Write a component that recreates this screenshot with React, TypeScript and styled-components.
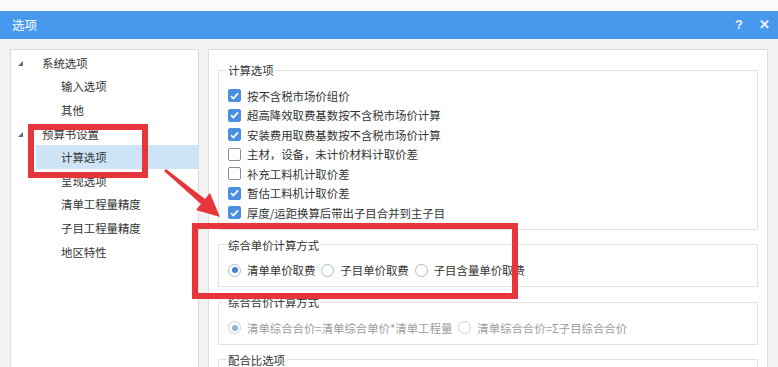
import styled, { createGlobalStyle } from 'styled-components'

const GlobalStyle = createGlobalStyle`
  html, body {
    margin: 0;
    padding: 0;
    background: #fafafa;
  }
  * {
    box-sizing: border-box;
  }
`

const FONT = `'Noto Sans CJK SC', 'Noto Sans', 'Liberation Sans', sans-serif`
const RED = '#e6353b'

const Screen = styled.div`
  position: relative;
  width: 778px;
  height: 367px;
  overflow: hidden;
  padding-top: 11px;
  background: #fafafa;
  font-family: ${FONT};
  font-size: 11.4px;
  line-height: 16px;
  color: #333;
`

const Dialog = styled.div`
  display: flex;
  flex-direction: column;
  height: 100%;
  background: #f2f2f2;
`

const TitleBar = styled.div`
  display: flex;
  flex-shrink: 0;
  align-items: center;
  justify-content: space-between;
  height: 28px;
  padding: 0 8px 0 12px;
  background: #4799ee;
  color: #fff;
  font-size: 12.5px;
`

const TitleButtons = styled.div`
  display: flex;
  align-items: center;
  gap: 16px;
  font-family: 'Liberation Sans', sans-serif;
  font-weight: bold;
  font-size: 13px;
  color: #eaf4ff;
`

const Body = styled.div`
  display: flex;
  flex: 1;
  min-height: 0;
  gap: 9px;
  padding: 10px 0 0 10px;
`

const Panel = styled.div<{ $width: number }>`
  width: ${(p) => p.$width}px;
  flex-shrink: 0;
  overflow: hidden;
  background: #fff;
  border: 1px solid #dcdcdc;
  border-bottom: none;
`

const TreeList = styled.div`
  display: flex;
  flex-direction: column;
  padding-top: 1px;
`

const TreeRow = styled.div<{ $level: number; $selected?: boolean }>`
  display: flex;
  align-items: center;
  height: 23.6px;
  margin-left: ${(p) => p.$level * 25}px;
  padding-left: ${(p) => (p.$level === 0 ? 7 : 25)}px;
  background: ${(p) => (p.$selected ? '#cde4f6' : 'transparent')};
  color: #333;
`

const Expander = styled.svg`
  width: 5px;
  height: 5px;
  margin-right: 19px;
  margin-top: 2px;
`

const RightPanel = styled(Panel)`
  padding: 12px 9px 0 9px;
`

const Group = styled.fieldset`
  margin: 0 0 7px;
  padding: 8px 10px 6px 8px;
  border: 1px solid #e2e2e2;
  min-width: 0;
`

const Legend = styled.legend`
  padding: 0 1px;
  color: #333;
`

const OptionRow = styled.label`
  display: flex;
  align-items: center;
  gap: 6px;
  height: 19.5px;
  white-space: nowrap;
`

const CheckBox = styled.span<{ $checked: boolean }>`
  display: inline-flex;
  align-items: center;
  justify-content: center;
  width: 13px;
  height: 13px;
  border-radius: 2px;
  border: 1px solid ${(p) => (p.$checked ? '#4a8fe0' : '#8c8c8c')};
  background: ${(p) => (p.$checked ? '#4a8fe0' : '#fff')};
  margin-left: 1px;
`

const RadioLine = styled.div`
  display: flex;
  align-items: center;
  gap: 5px;
  height: 19.5px;
  white-space: nowrap;
`

const RadioOption = styled.span<{ $disabled?: boolean }>`
  display: inline-flex;
  align-items: center;
  gap: 6px;
  color: ${(p) => (p.$disabled ? '#9c9c9c' : '#333')};
`

const RadioDot = styled.span<{ $checked: boolean; $disabled?: boolean }>`
  display: inline-flex;
  align-items: center;
  justify-content: center;
  width: 13px;
  height: 13px;
  border-radius: 50%;
  margin-left: 1px;
  border: 1px solid ${(p) => (p.$disabled ? '#cfcfcf' : '#a9bdd2')};
  background: #fff;

  &::after {
    content: '';
    display: ${(p) => (p.$checked ? 'block' : 'none')};
    width: 6px;
    height: 6px;
    border-radius: 50%;
    background: ${(p) => (p.$disabled ? '#8db4de' : '#3f82d4')};
  }
`

const Annotation = styled.div<{ $x: number; $y: number; $w: number; $h: number }>`
  position: absolute;
  left: ${(p) => p.$x}px;
  top: ${(p) => p.$y}px;
  width: ${(p) => p.$w}px;
  height: ${(p) => p.$h}px;
  border: 6px solid ${RED};
  pointer-events: none;
`

const ArrowLayer = styled.svg`
  position: absolute;
  left: 0;
  top: 0;
  width: 778px;
  height: 367px;
  pointer-events: none;
`

const treeItems = [
  { label: '系统选项', level: 0, expander: true },
  { label: '输入选项', level: 1 },
  { label: '其他', level: 1 },
  { label: '预算书设置', level: 0, expander: true },
  { label: '计算选项', level: 1, selected: true },
  { label: '呈现选项', level: 1 },
  { label: '清单工程量精度', level: 1 },
  { label: '子目工程量精度', level: 1 },
  { label: '地区特性', level: 1 },
]

const calcOptions = [
  { label: '按不含税市场价组价', checked: true },
  { label: '超高降效取费基数按不含税市场价计算', checked: true },
  { label: '安装费用取费基数按不含税市场价计算', checked: true },
  { label: '主材，设备，未计价材料计取价差', checked: false },
  { label: '补充工料机计取价差', checked: false },
  { label: '暂估工料机计取价差', checked: true },
  { label: '厚度/运距换算后带出子目合并到主子目', checked: true },
]

function Check({ checked }: { checked: boolean }) {
  return (
    <CheckBox $checked={checked}>
      {checked && (
        <svg width="9" height="8" viewBox="0 0 9 8">
          <path d="M1 4.2 L3.4 6.5 L8 1.4" fill="none" stroke="#fff" strokeWidth="1.7" />
        </svg>
      )}
    </CheckBox>
  )
}

function Radio({ label, checked, disabled }: { label: string; checked?: boolean; disabled?: boolean }) {
  return (
    <RadioOption $disabled={disabled}>
      <RadioDot $checked={!!checked} $disabled={disabled} />
      {label}
    </RadioOption>
  )
}

export default function App() {
  return (
    <>
      <GlobalStyle />
      <Screen>
        <Dialog>
          <TitleBar>
            <span>选项</span>
            <TitleButtons>
              <span>?</span>
              <span>✕</span>
            </TitleButtons>
          </TitleBar>

          <Body>
            <Panel $width={189}>
              <TreeList>
                {treeItems.map((item) => (
                  <TreeRow key={item.label} $level={item.level} $selected={item.selected}>
                    {item.expander && (
                      <Expander viewBox="0 0 5 5">
                        <path d="M5 0 L5 5 L0 5 Z" fill="#6b6b6b" />
                      </Expander>
                    )}
                    {item.label}
                  </TreeRow>
                ))}
              </TreeList>
            </Panel>

            <RightPanel $width={560}>
              <Group>
                <Legend>计算选项</Legend>
                {calcOptions.map((opt) => (
                  <OptionRow key={opt.label}>
                    <Check checked={opt.checked} />
                    {opt.label}
                  </OptionRow>
                ))}
              </Group>

              <Group>
                <Legend>综合单价计算方式</Legend>
                <RadioLine>
                  <Radio label="清单单价取费" checked />
                  <Radio label="子目单价取费" />
                  <Radio label="子目含量单价取费" />
                </RadioLine>
              </Group>

              <Group>
                <Legend>综合合价计算方式</Legend>
                <RadioLine>
                  <Radio label="清单综合合价=清单综合单价*清单工程量" checked disabled />
                  <Radio label="清单综合合价=Σ子目综合合价" disabled />
                </RadioLine>
              </Group>

              <Group>
                <Legend>配合比选项</Legend>
                <RadioLine />
              </Group>
            </RightPanel>
          </Body>
        </Dialog>

        <Annotation $x={28} $y={124} $w={120} $h={54} />
        <Annotation $x={192} $y={223} $w={326} $h={76} />
        <ArrowLayer viewBox="0 0 778 367">
          <polygon points="164,171 166,169 205,199 210,193 220,217 196,210 201,204" fill={RED} />
        </ArrowLayer>
      </Screen>
    </>
  )
}
